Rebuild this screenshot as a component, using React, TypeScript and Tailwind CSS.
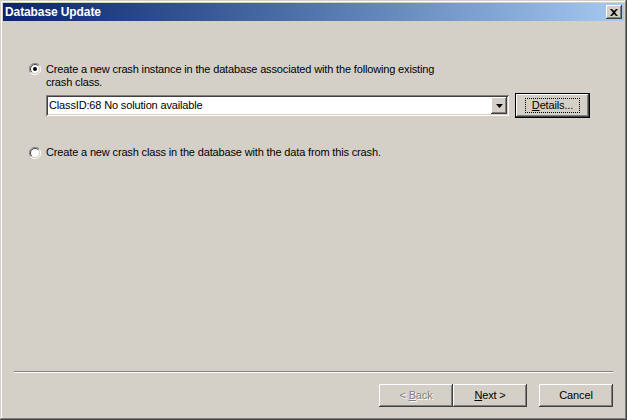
import React from 'react';

const raised =
  'bg-[#d4d0c8] shadow-[inset_-1px_-1px_#404040,inset_1px_1px_#ffffff,inset_-2px_-2px_#808080,inset_2px_2px_#d4d0c8]';
const sunken =
  'shadow-[inset_1px_1px_#808080,inset_-1px_-1px_#ffffff,inset_2px_2px_#404040,inset_-2px_-2px_#d4d0c8]';

function Radio({ checked }: { checked?: boolean }) {
  return (
    <svg width="12" height="12" viewBox="0 0 12 12" className="shrink-0">
      <path d="M10.5 2.5 A5.5 5.5 0 0 0 1.5 9.5" fill="none" stroke="#808080" />
      <path d="M1.5 9.5 A5.5 5.5 0 0 0 10.5 2.5" fill="none" stroke="#ffffff" />
      <circle cx="6" cy="6" r="4.5" fill="#ffffff" />
      <path d="M9.2 2.8 A4.5 4.5 0 0 0 2.8 9.2" fill="none" stroke="#404040" />
      <path d="M2.8 9.2 A4.5 4.5 0 0 0 9.2 2.8" fill="none" stroke="#d4d0c8" />
      {checked && <circle cx="6" cy="6" r="2" fill="#000000" />}
    </svg>
  );
}

function WizButton({
  children,
  disabled,
  focused,
}: {
  children: React.ReactNode;
  disabled?: boolean;
  focused?: boolean;
}) {
  return (
    <button
      className={`h-[23px] flex items-center justify-center ${raised} ${
        focused ? 'w-[73px] h-[21px] outline outline-1 outline-black' : 'w-[74px]'
      }`}
    >
      <span
        className={`px-[6px] leading-[13px] ${
          focused ? 'border border-dotted border-black' : 'border border-transparent'
        } ${disabled ? 'text-[#808080] [text-shadow:1px_1px_#ffffff]' : 'text-black'}`}
      >
        {children}
      </span>
    </button>
  );
}

export default function App() {
  return (
    <div
      className="w-[627px] h-[420px] p-[3px] flex flex-col bg-[#d4d0c8] text-[11px] tracking-[-0.15px] text-black shadow-[inset_-1px_-1px_#404040,inset_1px_1px_#d4d0c8,inset_-2px_-2px_#808080,inset_2px_2px_#ffffff] overflow-hidden"
      style={{ fontFamily: '"Liberation Sans", Arial, sans-serif' }}
    >
      {/* Title bar */}
      <div className="h-[18px] flex items-center justify-between pl-[2px] pr-[2px] bg-gradient-to-r from-[#0a246a] to-[#a6caf0]">
        <span className="text-white font-bold text-[12px] tracking-[-0.1px]">Database Update</span>
        <div className={`w-[16px] h-[14px] flex items-center justify-center ${raised}`}>
          <svg width="8" height="7" viewBox="0 0 8 7">
            <path d="M0 0h2l2 2 2-2h2L5 3.5 8 7H6L4 5 2 7H0l3-3.5z" fill="#000" />
          </svg>
        </div>
      </div>

      {/* Body */}
      <div className="flex-1 flex flex-col pt-[41px] pl-[26px]">
        <div className="flex items-start gap-[5px]">
          <div className="pt-[1px]">
            <Radio checked />
          </div>
          <div className="leading-[13px] pt-[1px]">
            Create a new crash instance in the database associated with the following existing
            <br />
            crash class.
          </div>
        </div>

        <div className="flex items-center mt-[5px] ml-[17px]">
          <div className={`w-[463px] h-[21px] bg-white flex items-center ${sunken} pl-[3px] pr-[2px]`}>
            <span className="flex-1">ClassID:68 No solution available</span>
            <div className={`w-[16px] h-[17px] flex items-center justify-center ${raised}`}>
              <svg width="7" height="4" viewBox="0 0 7 4">
                <path d="M0 0h7L3.5 4z" fill="#000" />
              </svg>
            </div>
          </div>
          <div className="ml-[7px]">
            <WizButton focused>
              <span className="underline">D</span>etails...
            </WizButton>
          </div>
        </div>

        <div className="flex items-center gap-[5px] mt-[29px]">
          <Radio />
          <span className="leading-[13px]">Create a new crash class in the database with the data from this crash.</span>
        </div>
      </div>

      {/* Separator */}
      <div className="mx-[11px] h-[2px] border-t border-[#808080] border-b border-b-white" />

      {/* Buttons */}
      <div className="flex justify-end items-center pt-[11px] pb-[10px] pr-[11px]">
        <WizButton disabled>
          &lt; <span className="underline">B</span>ack
        </WizButton>
        <WizButton>
          <span className="underline">N</span>ext &gt;
        </WizButton>
        <div className="ml-[12px]">
          <WizButton>Cancel</WizButton>
        </div>
      </div>
    </div>
  );
}
